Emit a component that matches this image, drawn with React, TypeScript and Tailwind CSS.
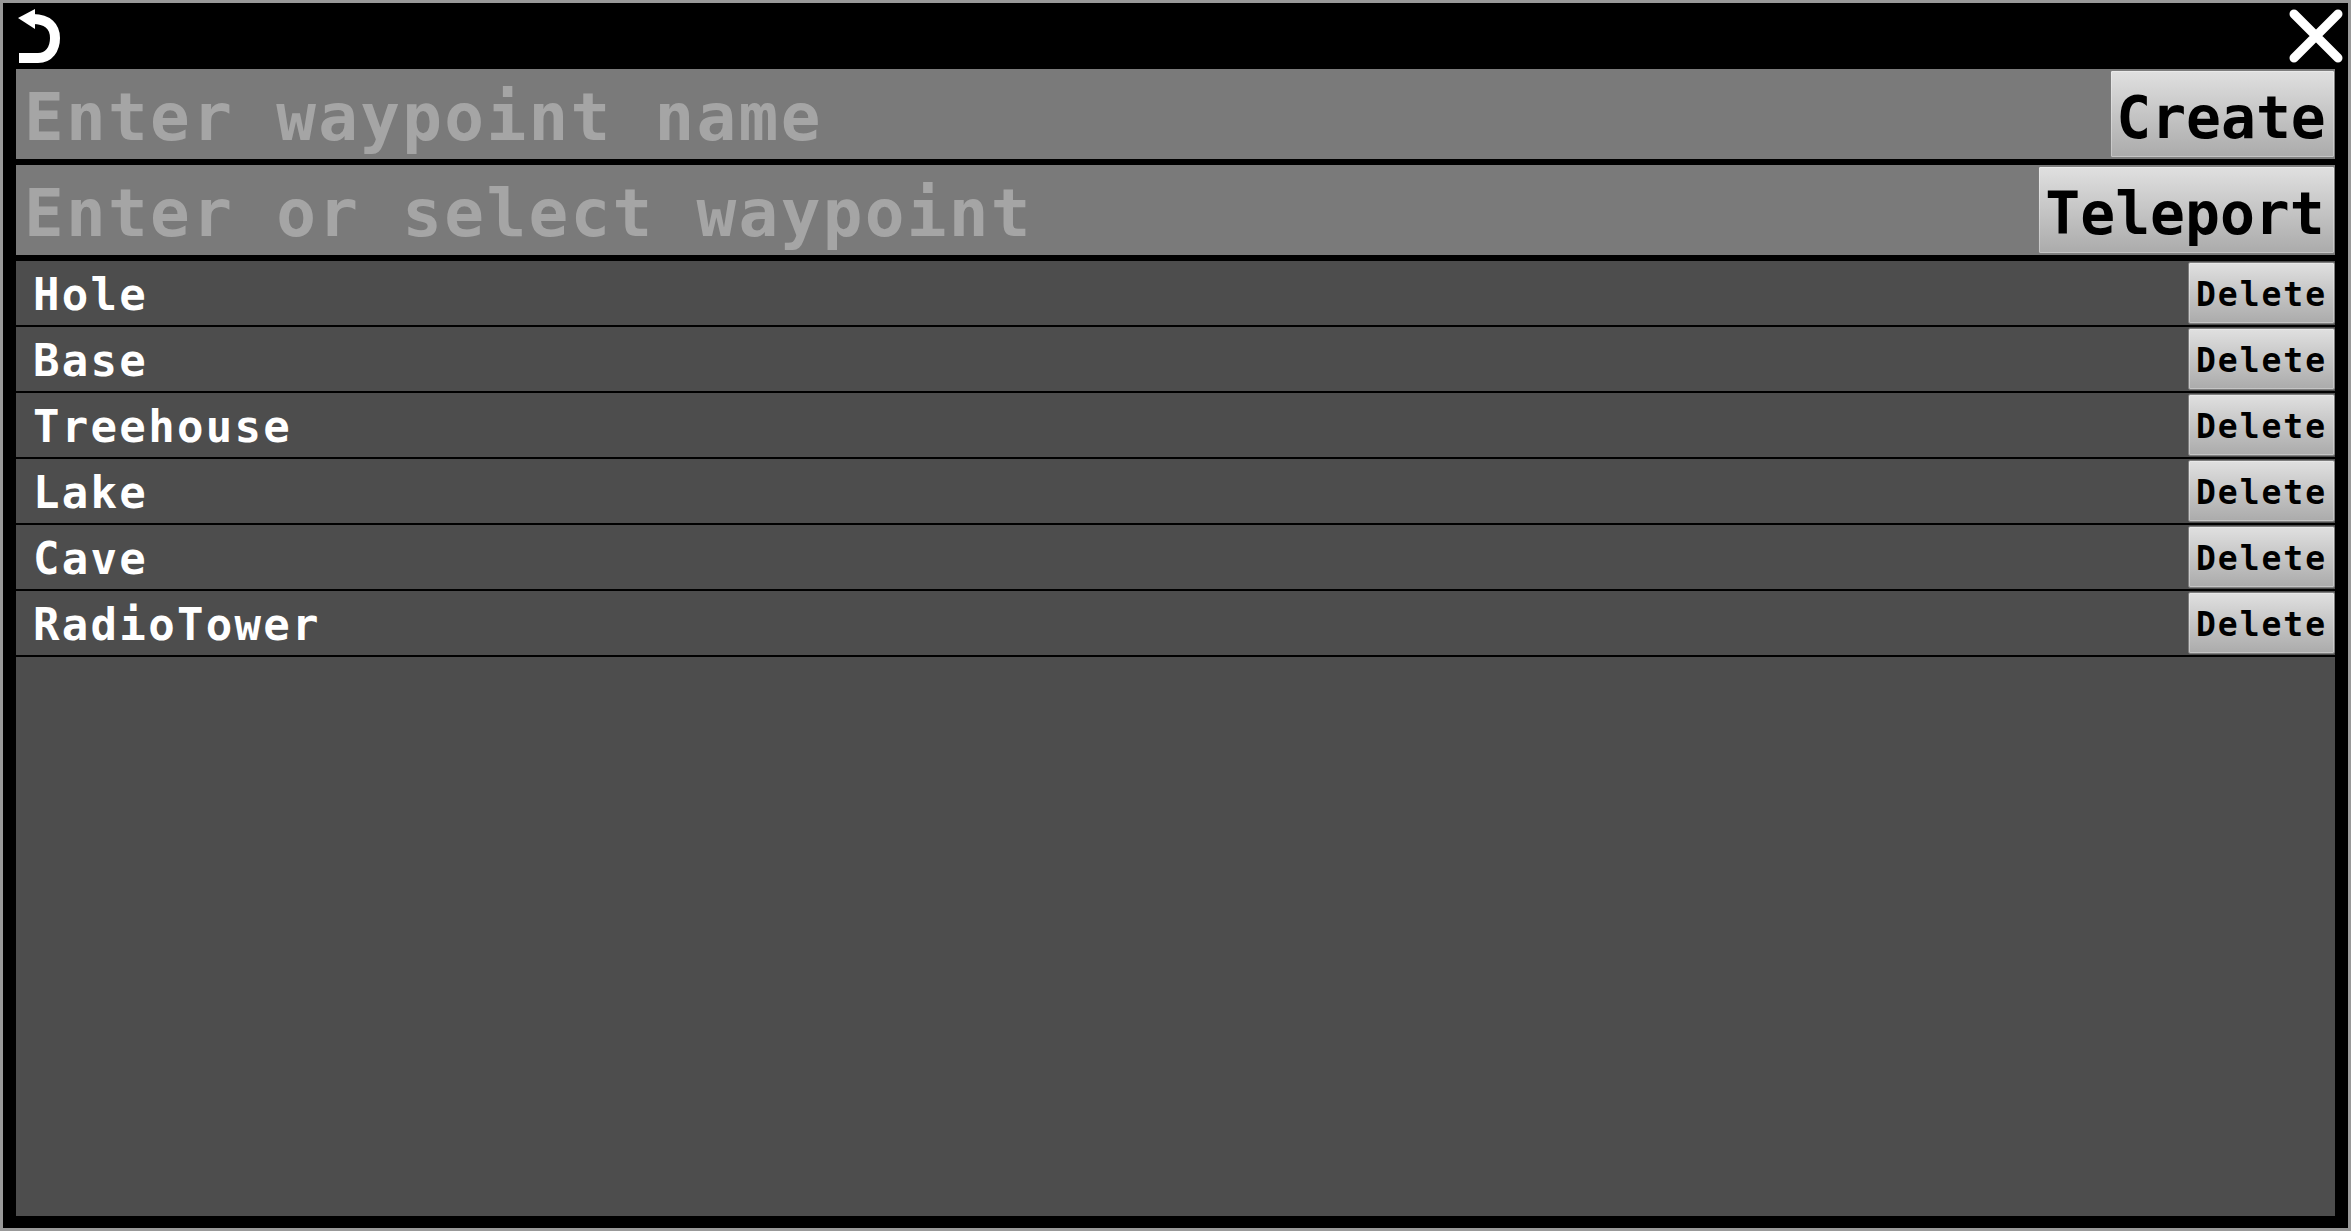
const waypoints = ["Hole", "Base", "Treehouse", "Lake", "Cave", "RadioTower"];

const mono = "font-['DejaVu_Sans_Mono','Liberation_Mono',monospace]";
const buttonBase =
  "my-px flex items-center justify-center rounded-[2px] border border-[#7d7d7d] bg-gradient-to-b from-[#e0e0e0] to-[#ababab] shadow-[inset_0_0_0_1px_rgba(255,255,255,0.3)] leading-none font-bold text-black";

function InputRow({ placeholder, action, width }: { placeholder: string; action: string; width: string }) {
  return (
    <div className="flex h-[90px] bg-[#7a7a7a]">
      <div className={`flex flex-1 items-center pt-[8px] pl-[8px] text-[66px] leading-none font-bold tracking-[2.3px] text-[#a5a5a5] ${mono}`}>
        {placeholder}
      </div>
      <button className={`${buttonBase} ${width} pt-[8px] pr-[3px] text-[58px] ${mono}`}>{action}</button>
    </div>
  );
}

export default function App() {
  return (
    <div className="flex h-[1231px] w-[2351px] flex-col overflow-hidden border-[3px] border-[#999999] bg-black px-[13px] pb-[12px]">
      <div className="flex h-[66px] items-start justify-between">
        <svg width="46" height="62" viewBox="0 0 46 62">
          <path d="M3 55H22C33 55 39 46 39 35C39 24 32 16 17 16" fill="none" stroke="white" strokeWidth="10" />
          <path d="M2 15L19 6V26Z" fill="white" />
        </svg>
        <svg width="54" height="54" viewBox="0 0 54 54" className="mt-[6px] mr-[-8px]">
          <path d="M5 5L49 49M49 5L5 49" fill="none" stroke="white" strokeWidth="9" strokeLinecap="round" />
        </svg>
      </div>

      <div className="flex flex-col gap-[6px]">
        <InputRow placeholder="Enter waypoint name" action="Create" width="w-[225px]" />
        <InputRow placeholder="Enter or select waypoint" action="Teleport" width="w-[297px]" />
      </div>

      <div className="mt-[6px] flex flex-1 flex-col bg-[#4d4d4d]">
        {waypoints.map((name) => (
          <div key={name} className="flex h-[66px] border-b-2 border-black">
            <div className={`flex flex-1 items-center pt-[3px] pl-[17px] text-[44px] leading-none font-bold tracking-[2.3px] text-white ${mono}`}>
              {name}
            </div>
            <button className={`${buttonBase} w-[147px] pt-[2px] text-[33px] tracking-[2px] ${mono}`}>Delete</button>
          </div>
        ))}
      </div>
    </div>
  );
}
